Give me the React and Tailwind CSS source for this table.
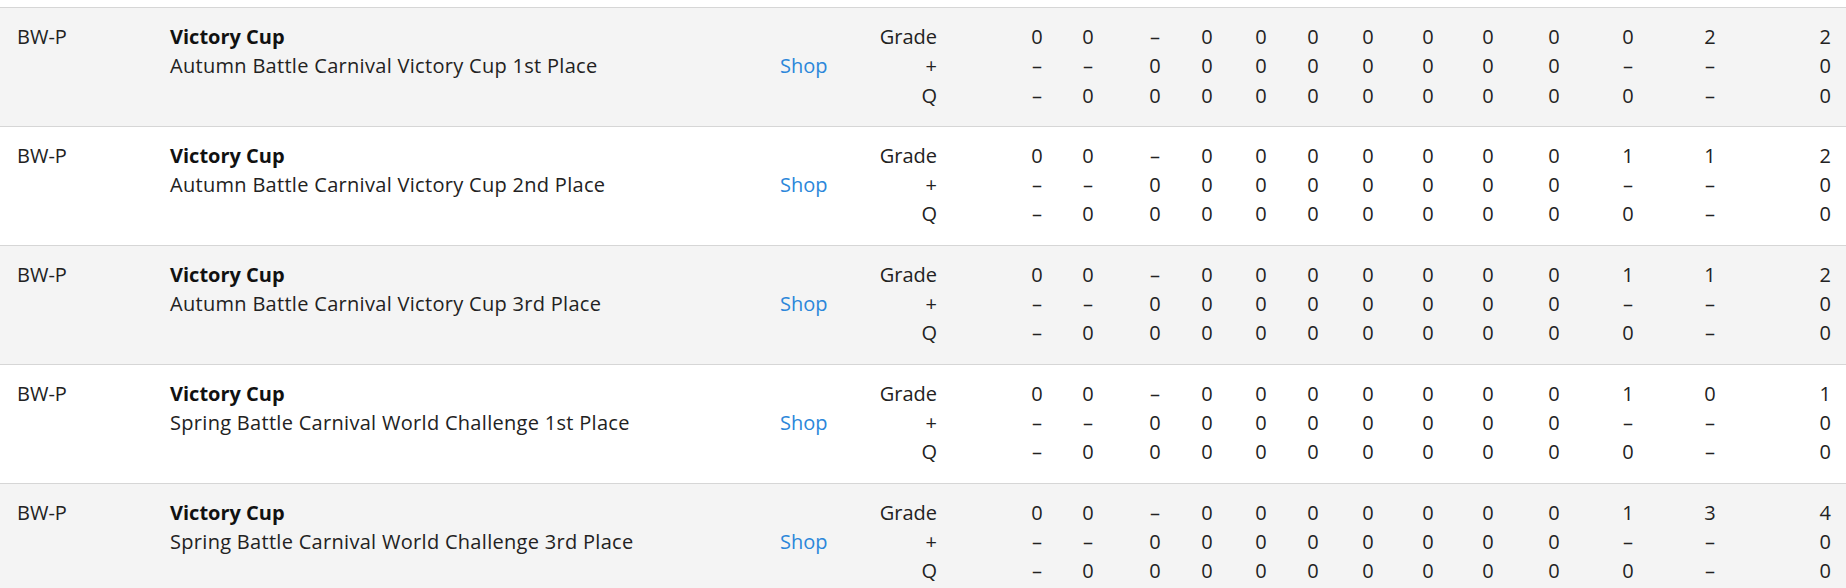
import React from "react";

const rows = [
  {
    desc: "Autumn Battle Carnival Victory Cup 1st Place",
    grade: ["0", "0", "–", "0", "0", "0", "0", "0", "0", "0", "0", "2", "2"],
  },
  {
    desc: "Autumn Battle Carnival Victory Cup 2nd Place",
    grade: ["0", "0", "–", "0", "0", "0", "0", "0", "0", "0", "1", "1", "2"],
  },
  {
    desc: "Autumn Battle Carnival Victory Cup 3rd Place",
    grade: ["0", "0", "–", "0", "0", "0", "0", "0", "0", "0", "1", "1", "2"],
  },
  {
    desc: "Spring Battle Carnival World Challenge 1st Place",
    grade: ["0", "0", "–", "0", "0", "0", "0", "0", "0", "0", "1", "0", "1"],
  },
  {
    desc: "Spring Battle Carnival World Challenge 3rd Place",
    grade: ["0", "0", "–", "0", "0", "0", "0", "0", "0", "0", "1", "3", "4"],
  },
];

const plus = ["–", "–", "0", "0", "0", "0", "0", "0", "0", "0", "–", "–", "0"];
const q = ["–", "0", "0", "0", "0", "0", "0", "0", "0", "0", "0", "–", "0"];

const colClasses = [
  "w-[40px] ml-[80px] text-center",
  "w-[40px] ml-[11px] text-center",
  "w-[40px] ml-[27px] text-center",
  "w-[40px] ml-[12px] text-center",
  "w-[40px] ml-[14px] text-center",
  "w-[40px] ml-[12px] text-center",
  "w-[40px] ml-[15px] text-center",
  "w-[40px] ml-[20px] text-center",
  "w-[40px] ml-[20px] text-center",
  "w-[40px] ml-[26px] text-center",
  "w-[40px] ml-[34px] text-center",
  "w-[40px] ml-[42px] text-center",
  "w-[101px] text-right",
];

function Row({ row, idx }) {
  const bg = idx % 2 === 0 ? "bg-[#f4f4f4]" : "bg-white";
  return (
    <div className={`flex border-t border-[#d6d6d6] pt-[14px] pb-[16px] pl-[17px] ${bg}`}>
      <div className="w-[153px]">BW-P</div>
      <div className="w-[610px] flex flex-col">
        <span className="font-bold text-[#111]">Victory Cup</span>
        <span className="tracking-[0.3px]">{row.desc}</span>
      </div>
      <div className="w-[70px] flex flex-col justify-center">
        <span className="text-[#2b87da]">Shop</span>
      </div>
      <div className="w-[87px] flex flex-col items-end">
        <span>Grade</span>
        <span>+</span>
        <span>Q</span>
      </div>
      {colClasses.map((c, i) => (
        <div key={i} className={`flex flex-col ${c}`}>
          <span>{row.grade[i]}</span>
          <span>{plus[i]}</span>
          <span>{q[i]}</span>
        </div>
      ))}
    </div>
  );
}

export default function App() {
  return (
    <div
      className="w-[1846px] bg-white pt-[7px] text-[20px] leading-[29.3px] text-[#222]"
      style={{ fontFamily: '"Open Sans", "Noto Sans", sans-serif' }}
    >
      {rows.map((r, i) => (
        <Row key={i} row={r} idx={i} />
      ))}
    </div>
  );
}
